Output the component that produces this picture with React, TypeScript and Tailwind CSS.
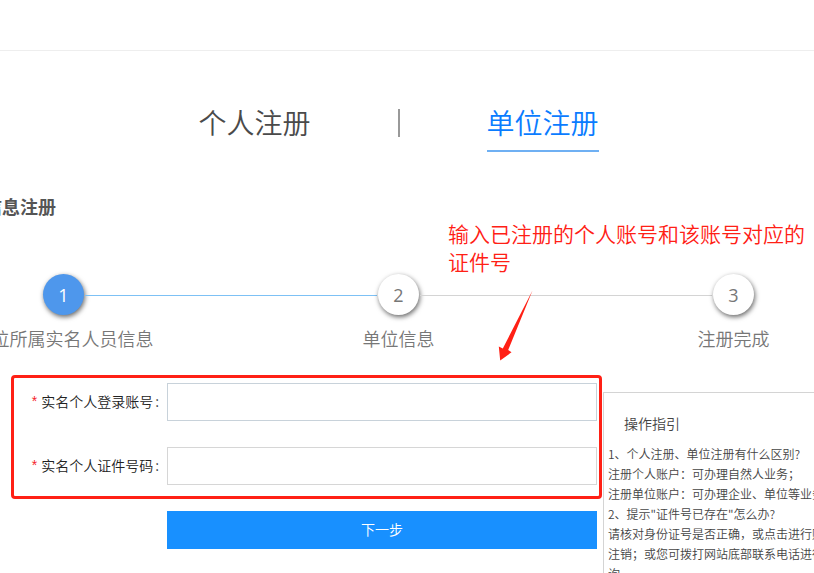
import React from "react";

type Step = {
  id: number;
  label: string;
  active: boolean;
  before: string;
  after: string;
};

type Field = {
  name: string;
  label: string;
  border: string;
};

const steps: Step[] = [
  {
    id: 1,
    label: "单位所属实名人员信息",
    active: true,
    before: "border-transparent",
    after: "border-[#7dc1f5]",
  },
  {
    id: 2,
    label: "单位信息",
    active: false,
    before: "border-[#7dc1f5]",
    after: "border-[#d4d4d4]",
  },
  {
    id: 3,
    label: "注册完成",
    active: false,
    before: "border-[#d4d4d4]",
    after: "border-transparent",
  },
];

const fields: Field[] = [
  { name: "account", label: "实名个人登录账号", border: "border-[#c8d2da]" },
  { name: "idcard", label: "实名个人证件号码", border: "border-[#d6d6d6]" },
];

const guide: string[] = [
  "1、个人注册、单位注册有什么区别?",
  "注册个人账户：可办理自然人业务；",
  "注册单位账户：可办理企业、单位等业务",
  '2、提示"证件号已存在"怎么办?',
  "请核对身份证号是否正确，或点击进行账",
  "注销；或您可拨打网站底部联系电话进行",
  "询。",
];

const Tabs: React.FC = () => {
  return (
    <nav className="grid grid-cols-[1fr_2px_1fr] text-[28px] leading-8">
      <div className="flex justify-end pr-[87px]">
        <a href="#person" className="h-[47px] pt-px text-[#4a4a4a]">
          个人注册
        </a>
      </div>
      <span className="mt-1 h-7 bg-[#999]"></span>
      <div className="flex pl-[87px]">
        <a
          href="#unit"
          className="h-[47px] border-b-2 border-[#6fb0f3] pt-px text-[#0a7cff]"
        >
          单位注册
        </a>
      </div>
    </nav>
  );
};

const Steps: React.FC = () => {
  return (
    <ol className="grid grid-cols-3 text-lg text-[#777]">
      {steps.map((step) => (
        <li key={step.id} className="flex flex-col items-center">
          <div className="flex w-full items-center gap-px">
            <span className={`h-[3px] flex-1 border-b ${step.before}`}></span>
            <span
              className={`flex size-[41px] items-center justify-center rounded-full pt-px font-['Open_Sans','Noto_Sans',sans-serif] font-normal shadow-[1px_2px_5px_rgba(0,0,0,0.6)] ${
                step.active ? "bg-[#4e97ec] text-white" : "bg-white"
              }`}
            >
              {step.id}
            </span>
            <span className={`h-[3px] flex-1 border-b ${step.after}`}></span>
          </div>
          <span className="mt-[9px] leading-7 whitespace-nowrap">
            {step.label}
          </span>
        </li>
      ))}
    </ol>
  );
};

const Guide: React.FC = () => {
  return (
    <aside className="mt-[17px] w-[211px] shrink-0 overflow-hidden border-t border-l border-[#d4d4d4] pl-1 text-[#444]">
      <h2 className="mt-[18px] pl-4 text-sm leading-6">操作指引</h2>
      <div className="mt-[9px] text-xs leading-5 whitespace-nowrap">
        {guide.map((line) => (
          <p key={line}>{line}</p>
        ))}
      </div>
    </aside>
  );
};

// red note with the arrow that points at the form
const Note: React.FC = () => {
  return (
    <div className="absolute top-[219px] left-[448px] w-[360px] text-[21px] leading-7 text-[#ff2015]">
      <p>输入已注册的个人账号和该账号对应的证件号</p>
      <svg
        className="absolute top-[71px] left-[50px]"
        width="36"
        height="72"
        viewBox="0 0 36 72"
        fill="#ff2015"
      >
        <path d="M34.5 0.5 L10.2 60 L13.5 62.3 L2.2 70.5 L0.8 56.5 L4.8 58.5 Z" />
      </svg>
    </div>
  );
};

const App: React.FC = () => {
  return (
    <div className="relative h-screen overflow-hidden bg-white font-['Noto_Sans_CJK_SC',sans-serif] font-[350]">
      <header className="h-[51px] border-b border-[#eee]"></header>

      <div className="mt-[54px] -mr-[87px] -ml-[104px]">
        <Tabs />
        <h1 className="mt-10 pl-[88px] text-lg leading-7 font-bold text-[#555]">
          信息注册
        </h1>
        <div className="mt-[54px]">
          <Steps />
        </div>
      </div>

      <div className="mt-[23px] flex items-start pl-[11px]">
        <form className="min-w-0 flex-1 text-sm">
          <div className="mr-px flex flex-col gap-[26px] rounded border-3 border-[#ff2015] pt-[5px] pr-[2px] pb-[11px]">
            {fields.map((field) => (
              <div key={field.name} className="flex items-center">
                <label
                  htmlFor={field.name}
                  className="flex w-[153px] shrink-0 justify-end pr-2 pb-0.5 whitespace-nowrap text-[#222]"
                >
                  <span className="mr-1 font-['Liberation_Sans',sans-serif] text-[#f5222d]">
                    *
                  </span>
                  {field.label}
                  <span className="pl-0.5">:</span>
                </label>
                <input
                  id={field.name}
                  name={field.name}
                  type="text"
                  className={`h-[38px] min-w-0 flex-1 border px-3 outline-none ${field.border}`}
                />
              </div>
            ))}
          </div>
          <div className="mt-3 pr-1.5 pl-[156px]">
            <button
              type="button"
              className="h-[38px] w-full bg-[#1890ff] pb-0.5 text-white"
            >
              下一步
            </button>
          </div>
        </form>
        <Guide />
      </div>

      <Note />
    </div>
  );
};

export default App;
